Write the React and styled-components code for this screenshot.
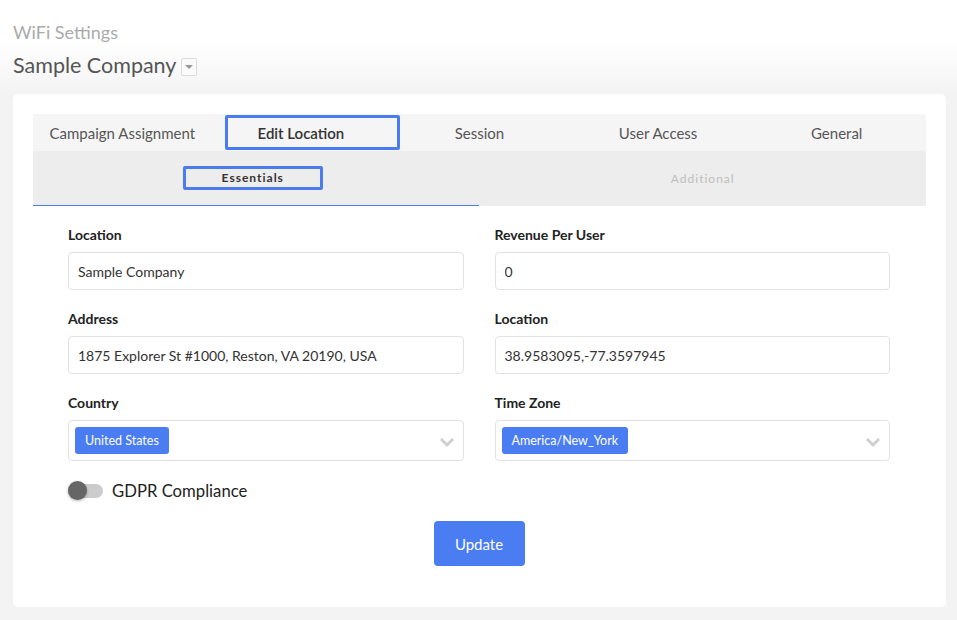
import { useState } from 'react';
import styled, { createGlobalStyle } from 'styled-components';

const GlobalStyle = createGlobalStyle`
  html, body {
    margin: 0;
    padding: 0;
  }
  body {
    font-family: Lato, "Open Sans", Arial, sans-serif;
    background: linear-gradient(to bottom, #ffffff 0px, #ffffff 40px, #f3f3f3 95px, #f3f3f3 100%);
    min-height: 100vh;
  }
`;

const Page = styled.div`
  padding: 21px 11px 14px 13px;
`;

const PageTitle = styled.div`
  font-size: 18px;
  line-height: 22px;
  color: #aaaaaa;
`;

const CompanyRow = styled.div`
  display: flex;
  align-items: center;
  gap: 5px;
  margin-top: 9px;
  font-size: 21.5px;
  line-height: 26px;
  color: #555;
`;

const Caret = styled.span`
  width: 14px;
  height: 16px;
  border: 1px solid #dcdcdc;
  border-radius: 2px;
  display: flex;
  align-items: center;
  justify-content: center;
  margin-top: 3px;
  background: #fafafa;

  &::before {
    content: '';
    border-left: 4px solid transparent;
    border-right: 4px solid transparent;
    border-top: 4px solid #999;
  }
`;

const Card = styled.div`
  margin-top: 16px;
  background: #fff;
  border-radius: 5px;
  padding: 20px 20px 20px;
`;

const Tabs = styled.div`
  display: grid;
  grid-template-columns: repeat(5, 1fr);
  height: 37px;
  background: #f5f5f5;
`;

const Tab = styled.div`
  position: relative;
  display: flex;
  align-items: center;
  justify-content: center;
  font-size: 15px;
  color: ${p => (p.$active ? '#333' : '#555')};
  font-weight: ${p => (p.$active ? 600 : 400)};

  ${p =>
    p.$active &&
    `&::after {
      content: '';
      position: absolute;
      left: 13px;
      right: -10px;
      top: 1px;
      bottom: 1px;
      border: 3px solid #4a7cf0;
      border-radius: 2px;
    }`}
`;

const SubTabs = styled.div`
  display: grid;
  grid-template-columns: 1fr 1fr;
  height: 55px;
  background: #ededed;
`;

const SubTab = styled.div`
  display: flex;
  align-items: center;
  justify-content: center;
  border-bottom: 1px solid ${p => (p.$active ? '#4a7cf0' : 'transparent')};
  margin-right: ${p => (p.$active ? '1px' : '0')};
`;

const SubTabLabel = styled.span`
  box-sizing: border-box;
  font-size: 12px;
  font-weight: ${p => (p.$active ? 700 : 400)};
  letter-spacing: 1px;
  color: ${p => (p.$active ? '#333' : '#bdbdbd')};
  ${p =>
    p.$active &&
    `border: 3px solid #4a7cf0;
     border-radius: 2px;
     width: 140px;
     height: 24px;
     display: flex;
     align-items: center;
     justify-content: center;
     margin-right: 6px;
     margin-top: -1px;`}
`;

const Form = styled.div`
  padding: 20px 36px 21px 35px;
`;

const Grid = styled.div`
  display: grid;
  grid-template-columns: 1fr 1fr;
  column-gap: 31px;
  row-gap: 20px;
`;

const Field = styled.div`
  display: flex;
  flex-direction: column;
`;

const Label = styled.label`
  font-size: 14px;
  line-height: 17px;
  font-weight: 700;
  color: #222;
  margin-bottom: 9px;
`;

const Input = styled.input`
  box-sizing: border-box;
  height: 38px;
  width: 100%;
  border: 1px solid #e2e2e2;
  border-radius: 4px;
  padding: 0 9px;
  font-family: inherit;
  font-size: 14px;
  color: #333;
  outline: none;
`;

const Select = styled.div`
  box-sizing: border-box;
  height: 41px;
  border: 1px solid #e2e2e2;
  border-radius: 4px;
  display: flex;
  align-items: center;
  justify-content: space-between;
  padding: 0 8px 0 6px;
`;

const Chip = styled.span`
  background: #4a7cf2;
  color: #fff;
  font-size: 12.5px;
  height: 27px;
  padding: 0 10px;
  border-radius: 3px;
  display: flex;
  align-items: center;
`;

const Chevron = styled.svg`
  width: 16px;
  height: 12px;
  margin-top: 3px;
`;

const ToggleRow = styled.label`
  display: flex;
  align-items: center;
  gap: 9px;
  margin-top: 20px;
  font-size: 16.7px;
  color: #222;
  cursor: pointer;
`;

const Track = styled.span`
  position: relative;
  width: 35px;
  height: 14px;
  border-radius: 7px;
  background: #cccccc;
`;

const Knob = styled.span`
  position: absolute;
  top: -3px;
  left: ${p => (p.$on ? '16px' : '0')};
  width: 19px;
  height: 19px;
  border-radius: 50%;
  background: ${p => (p.$on ? '#4a7cf2' : '#666')};
  box-shadow: 0 1px 3px rgba(0, 0, 0, 0.3);
`;

const Actions = styled.div`
  display: flex;
  justify-content: center;
  margin-top: 20px;
`;

const Button = styled.button`
  width: 91px;
  height: 45px;
  border: none;
  border-radius: 4px;
  background: #4a7cf2;
  color: #fff;
  font-family: inherit;
  font-size: 15px;
  cursor: pointer;
`;

const tabs = ['Campaign Assignment', 'Edit Location', 'Session', 'User Access', 'General'];

function ChevronIcon() {
  return (
    <Chevron viewBox="0 0 16 12">
      <path d="M2 3 L8 9 L14 3" fill="none" stroke="#cfcfcf" strokeWidth="3" />
    </Chevron>
  );
}

export default function App() {
  const [gdpr, setGdpr] = useState(false);

  return (
    <>
      <GlobalStyle />
      <Page>
        <PageTitle>WiFi Settings</PageTitle>
        <CompanyRow>
          Sample Company <Caret />
        </CompanyRow>
        <Card>
          <Tabs>
            {tabs.map(t => (
              <Tab key={t} $active={t === 'Edit Location'}>
                {t}
              </Tab>
            ))}
          </Tabs>
          <SubTabs>
            <SubTab $active>
              <SubTabLabel $active>Essentials</SubTabLabel>
            </SubTab>
            <SubTab>
              <SubTabLabel>Additional</SubTabLabel>
            </SubTab>
          </SubTabs>
          <Form>
            <Grid>
              <Field>
                <Label>Location</Label>
                <Input defaultValue="Sample Company" />
              </Field>
              <Field>
                <Label>Revenue Per User</Label>
                <Input defaultValue="0" />
              </Field>
              <Field>
                <Label>Address</Label>
                <Input defaultValue="1875 Explorer St #1000, Reston, VA 20190, USA" />
              </Field>
              <Field>
                <Label>Location</Label>
                <Input defaultValue="38.9583095,-77.3597945" />
              </Field>
              <Field>
                <Label>Country</Label>
                <Select>
                  <Chip>United States</Chip>
                  <ChevronIcon />
                </Select>
              </Field>
              <Field>
                <Label>Time Zone</Label>
                <Select>
                  <Chip>America/New_York</Chip>
                  <ChevronIcon />
                </Select>
              </Field>
            </Grid>
            <ToggleRow onClick={() => setGdpr(!gdpr)}>
              <Track>
                <Knob $on={gdpr} />
              </Track>
              GDPR Compliance
            </ToggleRow>
            <Actions>
              <Button>Update</Button>
            </Actions>
          </Form>
        </Card>
      </Page>
    </>
  );
}
